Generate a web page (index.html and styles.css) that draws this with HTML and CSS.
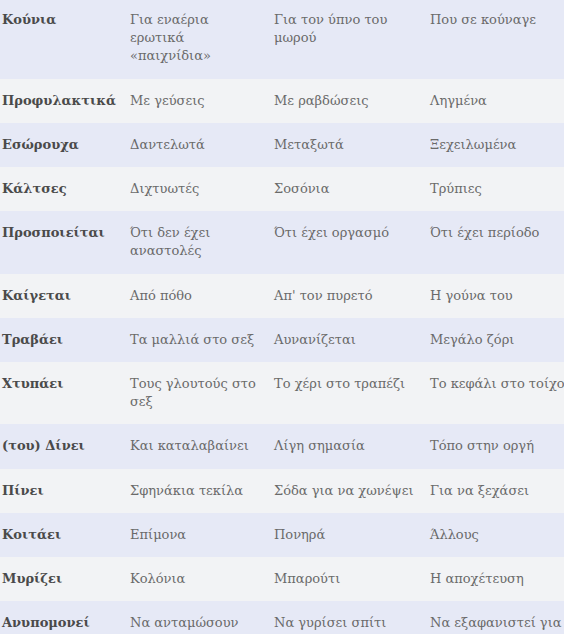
FILE: index.html
```html
<!DOCTYPE html>
<html lang="el">
<head>
<meta charset="utf-8">
<link rel="stylesheet" href="styles.css">
</head>
<body>
<table class="grid">
  <colgroup>
    <col class="c1"><col class="c2"><col class="c3"><col class="c4">
  </colgroup>
  <tbody>
    <tr class="alt first"><th>Κούνια</th><td>Για εναέρια ερωτικά «παιχνίδια»</td><td>Για τον ύπνο του μωρού</td><td>Που σε κούναγε</td></tr>
    <tr><th>Προφυλακτικά</th><td>Με γεύσεις</td><td>Με ραβδώσεις</td><td>Ληγμένα</td></tr>
    <tr class="alt"><th>Εσώρουχα</th><td>Δαντελωτά</td><td>Μεταξωτά</td><td>Ξεχειλωμένα</td></tr>
    <tr><th>Κάλτσες</th><td>Διχτυωτές</td><td>Σοσόνια</td><td>Τρύπιες</td></tr>
    <tr class="alt"><th>Προσποιείται</th><td>Ότι δεν έχει αναστολές</td><td>Ότι έχει οργασμό</td><td>Ότι έχει περίοδο</td></tr>
    <tr><th>Καίγεται</th><td>Από πόθο</td><td>Απ' τον πυρετό</td><td>Η γούνα του</td></tr>
    <tr class="alt"><th>Τραβάει</th><td>Τα μαλλιά στο σεξ</td><td>Αυνανίζεται</td><td>Μεγάλο ζόρι</td></tr>
    <tr><th>Χτυπάει</th><td>Τους γλουτούς στο σεξ</td><td>Το χέρι στο τραπέζι</td><td class="nowrap">Το κεφάλι στο τοίχο</td></tr>
    <tr class="alt"><th>(του) Δίνει</th><td>Και καταλαβαίνει</td><td>Λίγη σημασία</td><td>Τόπο στην οργή</td></tr>
    <tr><th>Πίνει</th><td>Σφηνάκια τεκίλα</td><td>Σόδα για να χωνέψει</td><td>Για να ξεχάσει</td></tr>
    <tr class="alt"><th>Κοιτάει</th><td>Επίμονα</td><td>Πονηρά</td><td>Άλλους</td></tr>
    <tr><th>Μυρίζει</th><td>Κολόνια</td><td>Μπαρούτι</td><td>Η αποχέτευση</td></tr>
    <tr class="alt"><th>Ανυπομονεί</th><td>Να ανταμώσουν</td><td>Να γυρίσει σπίτι</td><td class="nowrap">Να εξαφανιστεί για</td></tr>
  </tbody>
</table>
</body>
</html>
```
FILE: styles.css
```css
html, body {
  margin: 0;
  padding: 0;
  background: #f2f3f5;
  overflow: hidden;
}
.grid {
  border-collapse: collapse;
  table-layout: fixed;
  width: 600px;
  font-family: "DejaVu Serif", "Liberation Serif", serif;
  font-size: 13px;
  line-height: 18.2px;
}
.c1 { width: 128px; }
.c2 { width: 144px; }
.c3 { width: 156px; }
.c4 { width: 172px; }
.grid tr { background: #f2f3f5; }
.grid tr.alt { background: #e6e9f6; }
.grid th, .grid td {
  text-align: left;
  vertical-align: top;
  padding: 13px 14px 13px 2px;
}
.grid th {
  font-weight: bold;
  color: #4a4a4a;
}
.grid td { color: #6a6a6a; }
.grid tr.first th, .grid tr.first td { padding-top: 11px; }
.nowrap { white-space: nowrap; }
```
